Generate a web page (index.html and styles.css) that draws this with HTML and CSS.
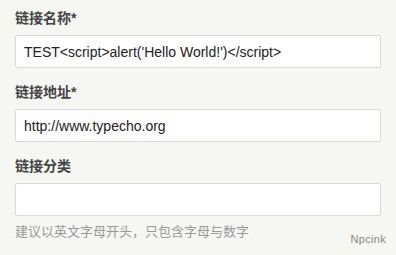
FILE: index.html
```html
<!DOCTYPE html>
<html lang="zh">
<head>
<meta charset="utf-8">
<title>链接</title>
<link rel="stylesheet" href="styles.css">
</head>
<body>
<form class="form">
  <div class="field">
    <label class="label">链接名称*</label>
    <input class="input" type="text" value="TEST&lt;script&gt;alert('Hello World!')&lt;/script&gt;">
  </div>
  <div class="field">
    <label class="label">链接地址*</label>
    <input class="input" type="text" value="http://www.typecho.org">
  </div>
  <div class="field last">
    <label class="label">链接分类</label>
    <input class="input" type="text" value="">
    <p class="hint">建议以英文字母开头，只包含字母与数字</p>
  </div>
</form>
<div class="watermark">Npcink</div>
</body>
</html>
```
FILE: styles.css
```css
html, body {
  margin: 0;
  padding: 0;
  background: #f6f6f3;
  font-family: "Liberation Sans", Arial, "Noto Sans CJK SC", sans-serif;
  color: #444;
  height: 100%;
}
.form {
  padding: 8px 15px 0 15px;
  width: 366px;
}
.field {
  display: flex;
  flex-direction: column;
  margin-bottom: 14px;
}
.field.last {
  margin-bottom: 0;
}
.label {
  font-size: 14px;
  line-height: 20px;
  font-weight: bold;
  color: #444;
  margin-bottom: 7px;
}
.input {
  box-sizing: border-box;
  width: 366px;
  height: 33px;
  margin: 0;
  padding: 0 8px;
  border: 1px solid #d9d9d6;
  border-radius: 2px;
  background: #fff;
  font-family: "Liberation Sans", Arial, sans-serif;
  font-size: 14px;
  color: #222;
  outline: none;
}
.hint {
  margin: 8px 0 0 0;
  font-size: 13px;
  line-height: 16px;
  color: #999;
}
.watermark {
  position: absolute;
  right: 10px;
  top: 232px;
  font-size: 11px;
  line-height: 14px;
  color: #888;
  letter-spacing: 0.3px;
}
```
